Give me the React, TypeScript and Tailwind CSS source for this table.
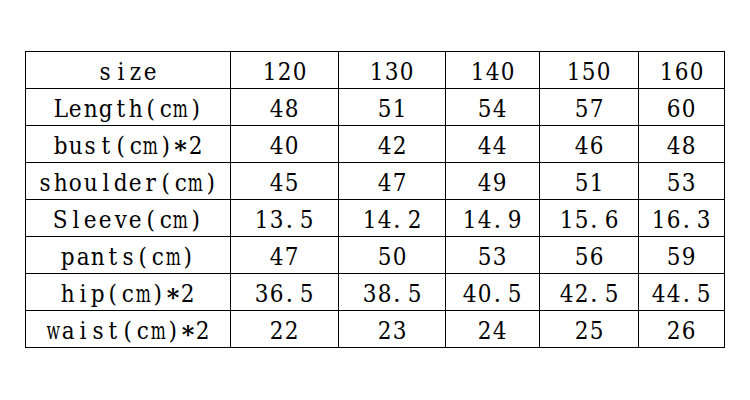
import React from "react";

const cols = ["w-[204px]", "w-[107px]", "w-[106px]", "w-[93px]", "w-[98px]", "w-[85px]"];

const rows: string[][] = [
  ["size", "120", "130", "140", "150", "160"],
  ["Length(cm)", "48", "51", "54", "57", "60"],
  ["bust(cm)*2", "40", "42", "44", "46", "48"],
  ["shoulder(cm)", "45", "47", "49", "51", "53"],
  ["Sleeve(cm)", "13.5", "14.2", "14.9", "15.6", "16.3"],
  ["pants(cm)", "47", "50", "53", "56", "59"],
  ["hip(cm)*2", "36.5", "38.5", "40.5", "42.5", "44.5"],
  ["waist(cm)*2", "22", "23", "24", "25", "26"],
];

// fixed 15px slots, like the half-width glyphs of the original
function MonoText({ text }: { text: string }) {
  return (
    <span className="inline-flex">
      {text.split("").map((ch, i) => {
        if (ch === "*") {
          return (
            <span key={i} className="inline-flex w-[15px] justify-center font-bold text-[24px] translate-y-[4px]">
              *
            </span>
          );
        }
        if (ch === ".") {
          return (
            <span key={i} className="inline-flex w-[15px] justify-start pl-[1px]">
              .
            </span>
          );
        }
        const wide = ch === "m" || ch === "w";
        return (
          <span key={i} className="inline-flex w-[15px] justify-center">
            <span className={wide ? "inline-block scale-x-[0.66]" : "inline-block scale-x-[0.9]"}>{ch}</span>
          </span>
        );
      })}
    </span>
  );
}

export default function App() {
  return (
    <div className="h-[400px] w-[750px] bg-white pl-[25px] pt-[51px] font-['DejaVu_Serif','Liberation_Serif',serif]">
      <div className="inline-flex flex-col gap-px border border-black bg-black">
        {rows.map((row, r) => (
          <div key={r} className="flex gap-px">
            {row.map((cell, c) => (
              <div
                key={c}
                className={`${cols[c]} flex h-[36px] items-center justify-center bg-white pt-[3px] text-[24px] leading-none text-black`}
              >
                <MonoText text={cell} />
              </div>
            ))}
          </div>
        ))}
      </div>
    </div>
  );
}
